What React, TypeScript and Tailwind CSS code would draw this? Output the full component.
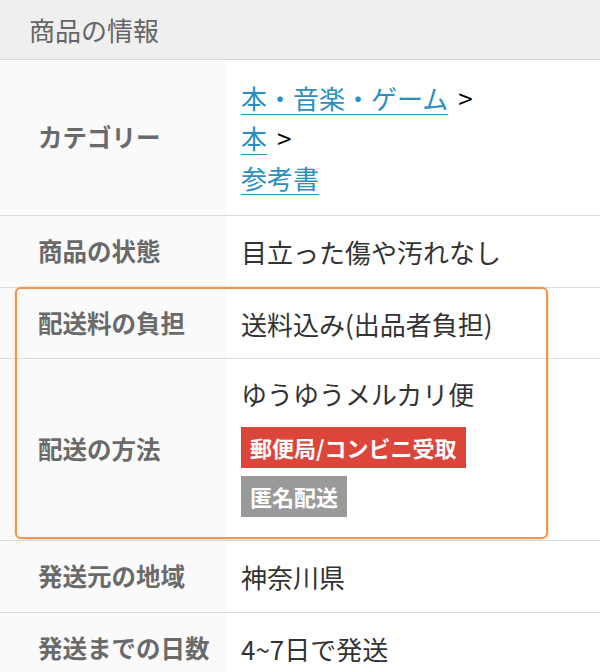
export default function App() {
  const font = { fontFamily: '"Noto Sans CJK JP", "Noto Sans", sans-serif' };

  return (
    <div className="relative w-[600px] h-[672px] overflow-hidden bg-white" style={font}>
      {/* Section header */}
      <div className="h-[60px] bg-[#efefef] border-b border-[#d8d8d8] flex items-center pl-[29px] text-[26px] text-[#666]">
        商品の情報
      </div>

      <Row label="カテゴリー" height="h-[156px]">
        <div className="flex flex-col text-[26px] leading-[40px]">
          <div>
            <a className="text-[#2a8fc0] underline underline-offset-[5px] decoration-1">本・音楽・ゲーム</a>
            <span className="text-black ml-[10px]">&gt;</span>
          </div>
          <div>
            <a className="text-[#2a8fc0] underline underline-offset-[5px] decoration-1">本</a>
            <span className="text-black ml-[10px]">&gt;</span>
          </div>
          <div>
            <a className="text-[#2a8fc0] underline underline-offset-[5px] decoration-1">参考書</a>
          </div>
        </div>
      </Row>

      <Row label="商品の状態" height="h-[72px]">
        <span className="text-[26px] text-[#333]">目立った傷や汚れなし</span>
      </Row>

      <Row label="配送料の負担" height="h-[71px]">
        <span className="text-[26px] text-[#333]">送料込み(出品者負担)</span>
      </Row>

      <Row label="配送の方法" height="h-[182px]">
        <div className="flex flex-col items-start mb-[6px]">
          <span className="text-[26px] text-[#333] leading-[34px]">ゆうゆうメルカリ便</span>
          <span className="mt-[16px] h-[41px] px-[9px] flex items-center bg-[#dc4539] text-white font-bold text-[22px]">
            郵便局/コンビニ受取
          </span>
          <span className="mt-[8px] h-[41px] px-[9px] flex items-center bg-[#9a9a9a] text-white font-bold text-[22px]">
            匿名配送
          </span>
        </div>
      </Row>

      <Row label="発送元の地域" height="h-[72px]">
        <span className="text-[26px] text-[#333]">神奈川県</span>
      </Row>

      <Row label="発送までの日数" height="h-[72px]">
        <span className="text-[26px] text-[#333]">4~7日で発送</span>
      </Row>

      {/* Orange annotation box drawn over the shipping rows */}
      <div className="absolute left-[15px] top-[287px] w-[533px] h-[252px] rounded-[6px] border-2 border-[#f29550] shadow-[0_0_2px_#f6b27c]" />
    </div>
  );
}

function Row({ label, height, children }: { label: string; height: string; children: React.ReactNode }) {
  return (
    <div className={`grid grid-cols-[225px_1fr] border-b border-[#dcdcdc] ${height}`}>
      <div className="bg-[#fafafa] flex items-center pl-[38px] text-[24.5px] font-bold text-[#6a6a6a]">{label}</div>
      <div className="flex items-center pl-[16px]">{children}</div>
    </div>
  );
}
